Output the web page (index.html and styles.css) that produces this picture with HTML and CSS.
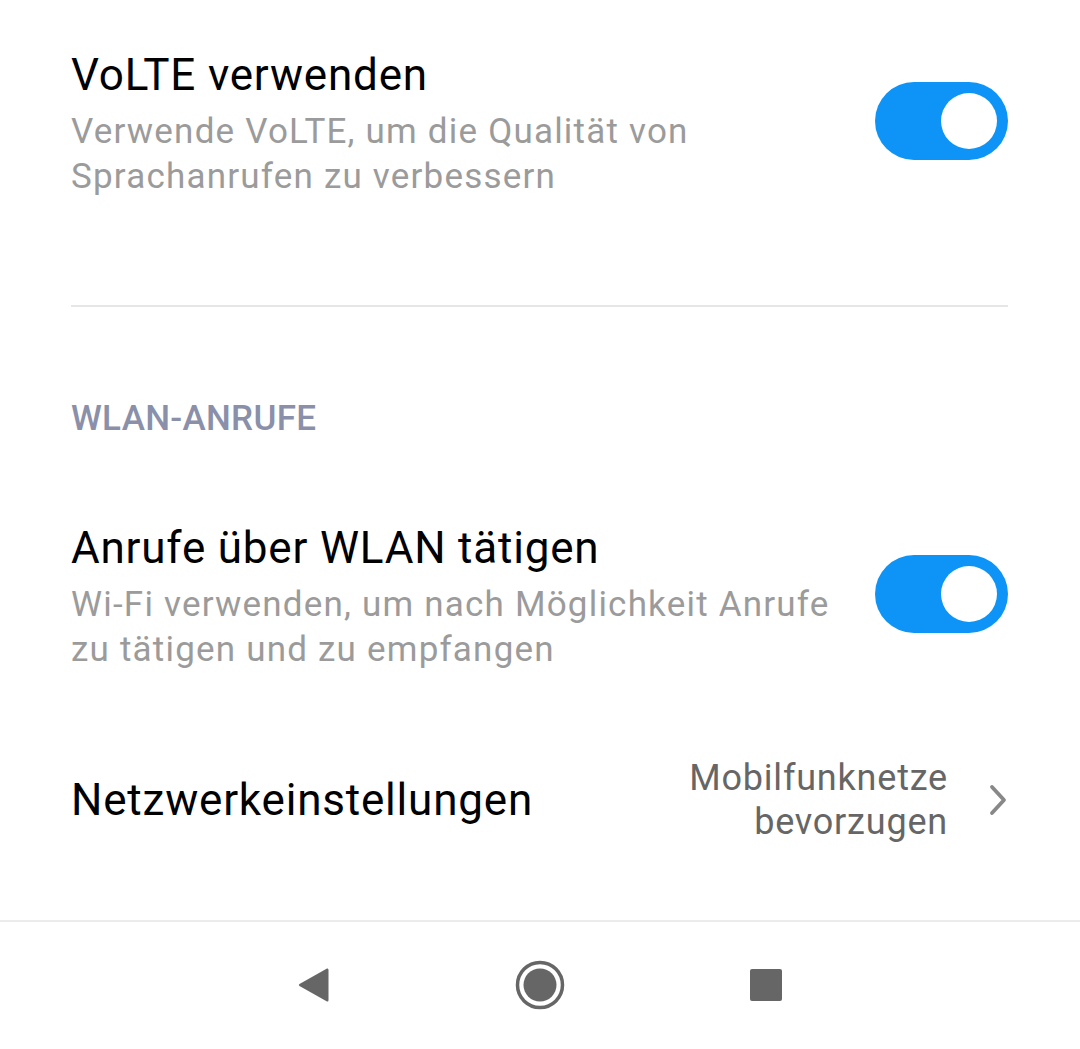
FILE: index.html
```html
<!DOCTYPE html>
<html lang="de">
<head>
  <meta charset="UTF-8">
  <title>Mobilfunk</title>
  <meta name="viewport" content="width=device-width, initial-scale=1.0">
  <link rel="stylesheet" href="styles.css">
</head>
<body>

  <div class="settings">

    <!-- VoLTE -->
    <div class="row row-first">
      <div class="text">
        <div class="title">VoLTE verwenden</div>
        <div class="summary">Verwende VoLTE, um die Qualität von<br>Sprachanrufen zu verbessern</div>
      </div>
      <div class="toggle on"><span class="knob"></span></div>
    </div>

    <div class="divider"></div>

    <div class="section">WLAN-ANRUFE</div>

    <!-- WLAN calls -->
    <div class="row row-wifi">
      <div class="text">
        <div class="title">Anrufe über WLAN tätigen</div>
        <div class="summary">Wi-Fi verwenden, um nach Möglichkeit Anrufe<br>zu tätigen und zu empfangen</div>
      </div>
      <div class="toggle on"><span class="knob"></span></div>
    </div>

    <!-- Network settings -->
    <div class="row row-net">
      <div class="title">Netzwerkeinstellungen</div>
      <div class="value">Mobilfunknetze<br>bevorzugen</div>
      <svg class="chevron" width="20" height="32" viewBox="0 0 20 32">
        <path d="M4 3 L16 16 L4 29" fill="none" stroke="#888" stroke-width="3.8" stroke-linecap="round" stroke-linejoin="round"/>
      </svg>
    </div>

  </div>

  <!-- Navigation bar -->
  <div class="navbar">
    <svg width="34" height="38" viewBox="0 0 34 38">
      <path d="M30 2.5 Q31.5 2 31.5 4 L31.5 34 Q31.5 36 30 35.5 L2.5 20 Q1 19 2.5 18 Z" fill="#666"/>
    </svg>
    <svg width="50" height="50" viewBox="0 0 50 50">
      <circle cx="25" cy="25" r="22.5" fill="none" stroke="#666" stroke-width="3.5"/>
      <circle cx="25" cy="25" r="16.5" fill="#666"/>
    </svg>
    <svg width="34" height="34" viewBox="0 0 34 34">
      <rect x="1" y="1" width="32" height="32" rx="2" fill="#666"/>
    </svg>
  </div>

</body>
</html>
```

FILE: styles.css
```css
body {
  margin: 0;
  background: #fff;
  font-family: Roboto, "Noto Sans", sans-serif;
  width: 1080px;
  height: 1049px;
  overflow: hidden;
  display: flex;
  flex-direction: column;
}

.settings {
  flex: 1;
  padding: 0 72px 0 71px;
}

.row {
  display: flex;
  align-items: center;
}

.row-first {
  padding-top: 50px;
}

.text {
  flex: 1;
}

.title {
  font-size: 44px;
  line-height: 50px;
  letter-spacing: 0.8px;
  color: #000;
}

.summary {
  margin-top: 9px;
  font-size: 35px;
  line-height: 45px;
  letter-spacing: 1.2px;
  color: #9b9b9b;
  white-space: nowrap;
}

.toggle {
  width: 133px;
  height: 78px;
  border-radius: 39px;
  background: #0d94f6;
  display: flex;
  align-items: center;
  justify-content: flex-end;
  padding-right: 11px;
  box-sizing: border-box;
  margin-top: -8px;
}

.knob {
  width: 56px;
  height: 56px;
  border-radius: 50%;
  background: #fff;
}

.divider {
  height: 2px;
  background: #e6e6e6;
  margin-top: 106px;
}

.section {
  margin-top: 92px;
  font-size: 35px;
  line-height: 40px;
  font-weight: 500;
  color: #8a90a9;
  letter-spacing: 0.3px;
}

.row-wifi {
  margin-top: 84px;
}

.row-net {
  margin-top: 84px;
}

.row-net .title {
  flex: 1;
}

.value {
  text-align: right;
  font-size: 36px;
  line-height: 44px;
  letter-spacing: 0.8px;
  color: #666;
}

.chevron {
  margin-left: 40px;
}

.navbar {
  height: 129px;
  border-top: 2px solid #ececec;
  display: flex;
  align-items: center;
  justify-content: center;
  gap: 184px;
  padding-bottom: 2px;
  box-sizing: border-box;
}
```
